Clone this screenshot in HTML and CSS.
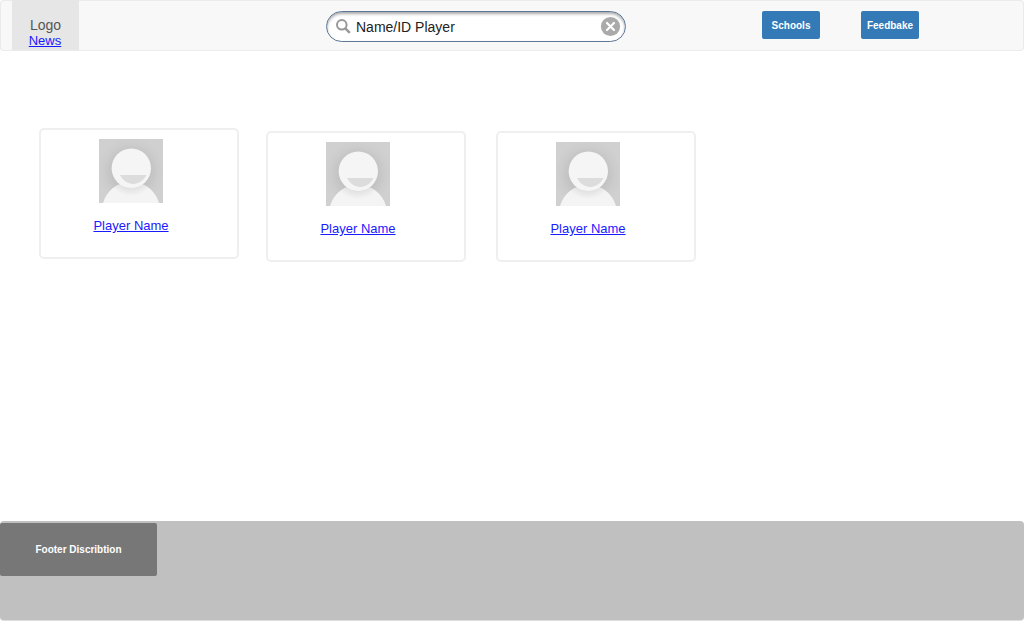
FILE: index.html
```
<!DOCTYPE html>
<html lang="en">
<head>
<meta charset="utf-8">
<meta name="viewport" content="width=device-width, initial-scale=1">
<title>Players</title>
<link rel="stylesheet" href="styles.css">
</head>
<body>
<svg class="defs" aria-hidden="true">
  <defs>
    <radialGradient id="backdrop" gradientUnits="userSpaceOnUse" cx="32" cy="32" r="34">
      <stop offset="0.55" stop-color="#c2c2c2"/>
      <stop offset="0.8" stop-color="#cccccc"/>
      <stop offset="1" stop-color="#d0d0d0"/>
    </radialGradient>
    <radialGradient id="neck" gradientUnits="userSpaceOnUse" cx="32" cy="32" r="28">
      <stop offset="0.5" stop-color="#dadada"/>
      <stop offset="0.9" stop-color="#f4f4f4"/>
    </radialGradient>
    <symbol id="avatar" viewBox="0 0 64 64">
      <rect width="64" height="64" fill="url(#backdrop)"/>
      <path d="M4 64C8 51 18 43 32 43S56 51 60 64Z" fill="url(#neck)"/>
      <circle cx="32.300" cy="29.300" r="19.700" fill="#f5f5f5"/>
      <path d="M21 36H47.500C44.500 41.500 40 45 34.300 45S24 41.500 21 36Z" fill="#dcdcdc"/>
    </symbol>
  </defs>
</svg>
<header class="topbar">
  <div class="brand">
    <span class="logo">Logo</span>
    <a class="link" href="#news">News</a>
  </div>
  <form class="search" role="search">
    <label class="search-label" for="player-search" aria-label="Name or ID of player">
      <svg class="search-icon" viewBox="0 0 16 16" aria-hidden="true"><circle cx="5.800" cy="5.800" r="4.800" fill="none" stroke="#999" stroke-width="2"/><path d="M9.300 9.300L13.800 13.800" stroke="#999" stroke-width="2.500"/></svg>
    </label>
    <input class="search-input" id="player-search" type="text" value="Name/ID Player">
    <button class="clear" type="reset" aria-label="Clear">
      <svg class="clear-icon" viewBox="0 0 20 20" aria-hidden="true"><circle cx="10.500" cy="9.500" r="9.600" fill="#aaa"/><path d="M7 6L14 13M14 6L7 13" stroke="#fff" stroke-width="2.200" stroke-linecap="round"/></svg>
    </button>
  </form>
  <nav class="actions">
    <button class="action" type="button">Schools</button>
    <button class="action" type="button">Feedbake</button>
  </nav>
</header>
<main class="players">
  <article class="card card-first">
    <svg class="avatar" role="img" aria-label="Player"><use href="#avatar"/></svg>
    <a class="link" href="#player-1">Player Name</a>
  </article>
  <article class="card">
    <svg class="avatar" role="img" aria-label="Player"><use href="#avatar"/></svg>
    <a class="link" href="#player-2">Player Name</a>
  </article>
  <article class="card">
    <svg class="avatar" role="img" aria-label="Player"><use href="#avatar"/></svg>
    <a class="link" href="#player-3">Player Name</a>
  </article>
</main>
<footer class="footer">
  <button class="footer-button" type="button">Footer Discribtion</button>
</footer>
</body>
</html>
```
FILE: styles.css
```
* {
  box-sizing: border-box;
}

body {
  display: flex;
  flex-direction: column;
  min-height: 100vh;
  margin: 0;
  background: #fff;
  font-family: "Liberation Sans", Arial, sans-serif;
  font-size: 13px;
}

button {
  border: 0;
  font-family: inherit;
  cursor: pointer;
}

.defs {
  position: absolute;
  width: 0;
  height: 0;
}

.topbar {
  display: grid;
  grid-template-columns: 67px 247fr 300px 136fr 157px 105fr;
  align-items: start;
  padding-left: 12px;
  background: #f8f8f8;
  border-radius: 4px;
  box-shadow: inset 0 0 0 1px #ebebeb;
}

.brand {
  display: flex;
  flex-direction: column;
  align-items: center;
  padding: 17px 0 1px;
  border-bottom: 1px solid #ebebeb;
  background: #e6e6e6;
}

.logo {
  color: #555;
  font-size: 14px;
  line-height: 16px;
}

.link {
  color: #1a1aff;
  line-height: 16px;
}

.brand .link {
  margin-right: 1px;
}

.search {
  grid-column: 3;
  display: flex;
  align-items: center;
  margin-top: 11px;
  padding: 0 5px 0 9px;
  border: 1px solid #5f7898;
  border-radius: 16px;
  background: #fff;
  box-shadow: inset 0 2px 3px #aaa;
}

.search-label {
  display: flex;
}

.search-icon {
  width: 16px;
  height: 16px;
}

.search-input {
  flex: 1;
  min-width: 0;
  height: 29px;
  padding: 0 4px;
  border: 0;
  outline: 0;
  background: transparent;
  color: #222;
  font-family: inherit;
  font-size: 14px;
}

.clear {
  display: flex;
  padding: 0;
  background: transparent;
}

.clear-icon {
  width: 20px;
  height: 20px;
  overflow: visible;
}

.actions {
  grid-column: 5;
  display: flex;
  justify-content: space-between;
  margin-top: 11px;
}

.action {
  width: 58px;
  height: 28px;
  padding: 0;
  border-radius: 2px;
  background: #337ab7;
  color: #fff;
  font-size: 10px;
  font-weight: bold;
}

.players {
  display: flex;
  flex: 1;
  flex-wrap: wrap;
  align-items: flex-start;
  gap: 30px;
  padding: 80px 39px 30px;
}

.card {
  display: flex;
  flex-direction: column;
  align-items: center;
  gap: 15px;
  width: 200px;
  padding: 9px 16px 23px 0;
  border: 2px solid #efefef;
  border-radius: 5px;
}

.card-first {
  margin: -3px -3px 0 0;
}

.avatar {
  width: 64px;
  height: 64px;
}

.footer {
  min-height: 100px;
  padding-top: 2px;
  border-bottom: 1px solid #ddd;
  border-radius: 4px;
  background: #c0c0c0;
}

.footer-button {
  width: 157px;
  height: 53px;
  border-radius: 2px;
  background: #777;
  color: #fff;
  font-size: 10px;
  font-weight: bold;
}
```
